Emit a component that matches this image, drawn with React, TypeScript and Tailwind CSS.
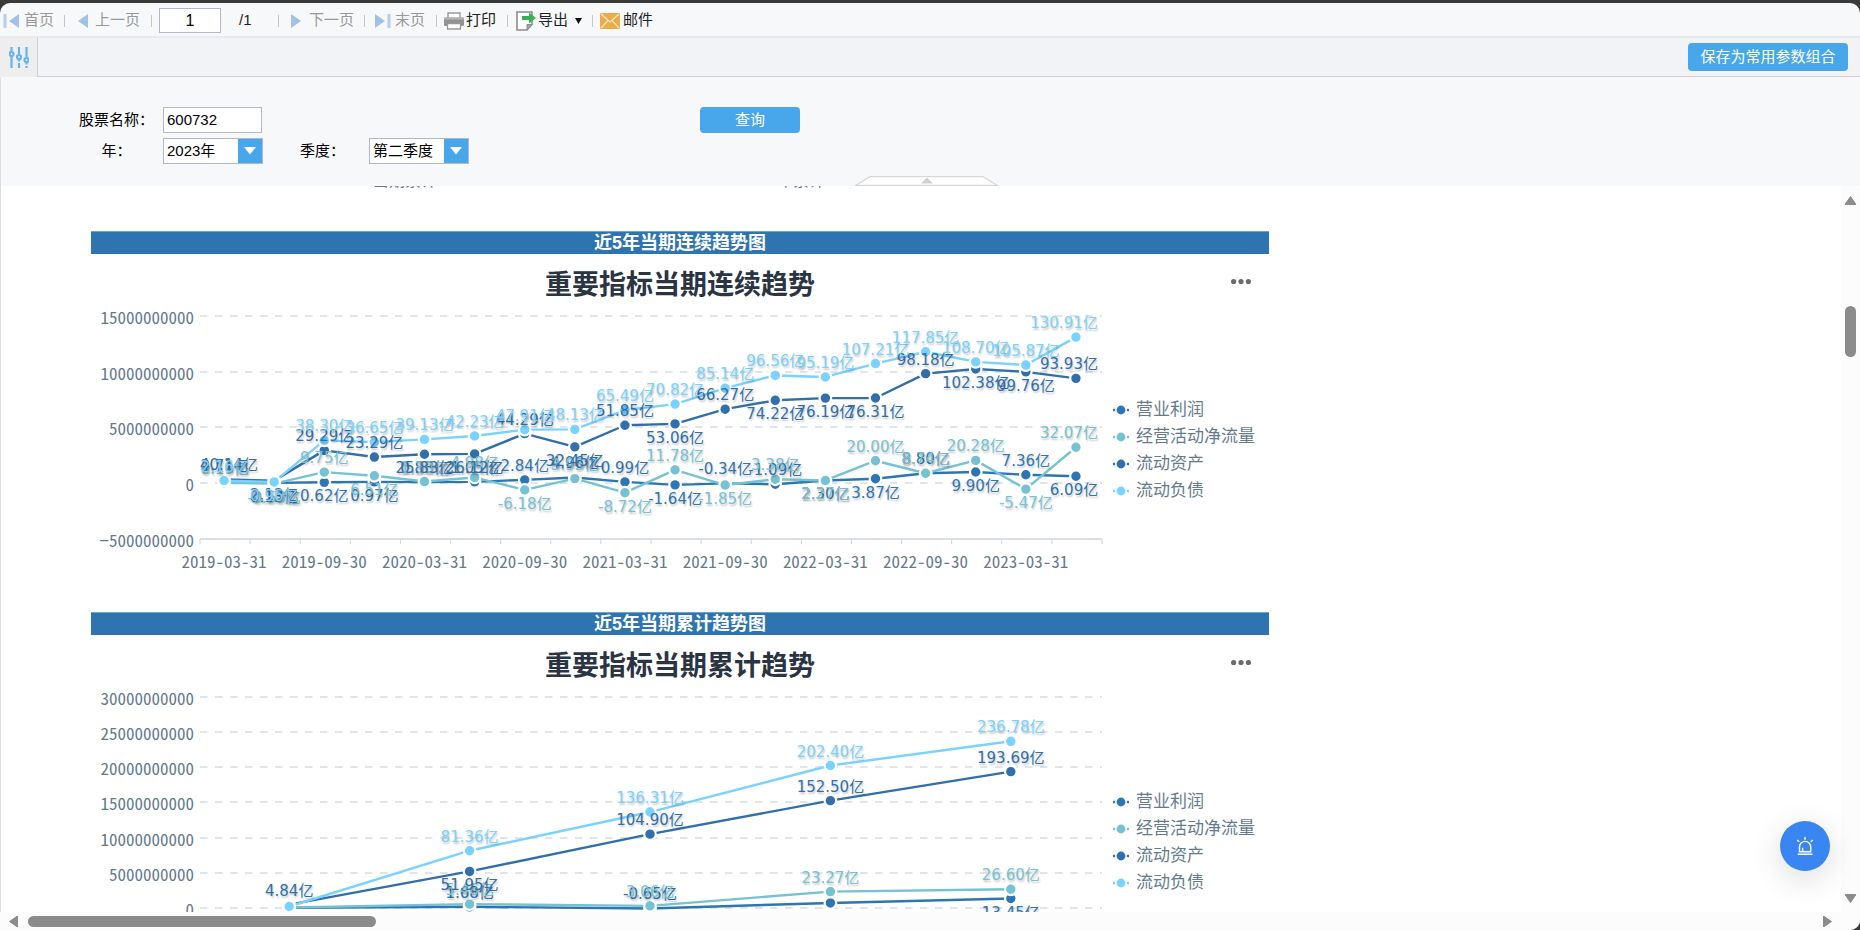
import React from 'react';

type Side = 'a' | 'b';
type Point = { v: number; text?: string; side: Side };
type Series = { name: string; color: string; points: Point[] };

const BLUE = '#2e75b3';
const TEAL = '#76c2d3';
const NAVY = '#316fac';
const SKY = '#79d2ff';

const parse = (src: string): Point[] =>
  src.split(' ').map((token) => {
    const [value, side, text] = token.split('/');
    return { v: Number(value), side: side as Side, text: text === '' ? undefined : text ?? value };
  });

const quarterly: Series[] = [
  {
    name: '营业利润',
    color: BLUE,
    points: parse(
      '2.71/a 0.13/b 0.62/b 0.97/b 0.83/a 1.05/a 2.84/a 4.96/a 0.99/a -1.64/b -0.34/a -1.09/a 2.30/b 3.87/b 8.80/a 9.90/b 7.36/a 6.09/b',
    ),
  },
  {
    name: '经营活动净流量',
    color: TEAL,
    points: parse(
      '0.19/a -0.53/b 9.75/a 6.51/b 1.30/a 4.98/a -6.18/b 3.95/a -8.72/b 11.78/a -1.85/b 3.38/a 2.27/b 20.00/a 8.74/a 20.28/a -5.47/b 32.07/a',
    ),
  },
  {
    name: '流动资产',
    color: NAVY,
    points: parse(
      '3.20/a/40.14 2.13/b 29.29/a 23.29/a 25.83/b 26.12/b 44.29/a 32.45/b 51.85/a 53.06/b 66.27/a 74.22/b 76.19/b 76.31/b 98.18/a 102.38/b 99.76/b 93.93/a',
    ),
  },
  {
    name: '流动负债',
    color: SKY,
    points: parse(
      '2.16/a 0.96/b 38.30/a 36.65/a 39.13/a 42.23/a 47.91/a 48.13/a 65.49/a 70.82/a 85.14/a 96.56/a 95.19/a 107.21/a 117.85/a 108.70/a 105.87/a 130.91/a',
    ),
  },
];

const yearly: Series[] = [
  { name: '营业利润', color: BLUE, points: parse('0.40/b/ 1.68/a -0.65/a 7.20/b/ 13.45/b') },
  { name: '经营活动净流量', color: TEAL, points: parse('0.80/b/ 5.46/a 3.06/a 23.27/a 26.60/a') },
  { name: '流动资产', color: NAVY, points: parse('4.84/a 51.95/b 104.90/a 152.50/a 193.69/a') },
  { name: '流动负债', color: SKY, points: parse('2.16/b/ 81.36/a 136.31/a 202.40/a 236.78/a') },
];

const LEFT = 109;
const RIGHT = 1011;

type ChartProps = {
  series: Series[];
  ticks: { label: string; y: number }[];
  zeroY: number;
  scale: number;
  axisY?: number;
  dates?: string[];
};

function LineChart({ series, ticks, zeroY, scale, axisY, dates }: ChartProps) {
  const count = series[0].points.length;
  const step = (RIGHT - LEFT) / count;
  const px = (i: number) => LEFT + step * (i + 0.5) - 1;
  const py = (v: number) => zeroY - v * scale;
  return (
    <svg width="1022" height="300" viewBox="0 0 1022 300" className="shrink-0 overflow-visible">
      {ticks.map((t) => (
        <g key={t.label}>
          {t.y !== axisY && (
            <line x1={LEFT} x2={RIGHT} y1={t.y} y2={t.y} stroke="#e0e4eb" strokeWidth="2" strokeDasharray="7.5 7.5" />
          )}
          <text
            x={LEFT - 6}
            y={t.y}
            textAnchor="end"
            dominantBaseline="central"
            className="fill-[#667a8d] font-['Noto_Sans_Mono_CJK_SC','Noto_Sans_CJK_SC',sans-serif] text-[17px]"
          >
            {t.label}
          </text>
        </g>
      ))}
      {axisY !== undefined && (
        <g stroke="#cdd4db">
          <line x1={LEFT} x2={RIGHT} y1={axisY} y2={axisY} strokeWidth="1.5" />
          {Array.from({ length: count + 1 }, (_, i) => (
            <line key={i} x1={LEFT + step * i} x2={LEFT + step * i} y1={axisY} y2={axisY + 5} />
          ))}
        </g>
      )}
      {dates?.map((d, i) => (
        <text
          key={d}
          x={px(i * 2)}
          y="248"
          textAnchor="middle"
          dominantBaseline="central"
          className="fill-[#667a8d] font-['Noto_Sans_Mono_CJK_SC','Noto_Sans_CJK_SC',sans-serif] text-[17px]"
        >
          {d}
        </text>
      ))}
      {series.map((s) => (
        <g key={s.name}>
          <polyline
            points={s.points.map((p, i) => `${px(i)},${py(p.v)}`).join(' ')}
            fill="none"
            stroke={s.color}
            strokeWidth="2.4"
            strokeLinejoin="round"
          />
          {s.points.map((p, i) => (
            <circle key={i} cx={px(i)} cy={py(p.v)} r="5.8" fill={s.color} stroke="#fff" strokeWidth="2.2" />
          ))}
        </g>
      ))}
      {series.map((s) => (
        <g
          key={s.name}
          fill={s.color}
          className="font-['DejaVu_Sans','Noto_Sans_CJK_SC',sans-serif] text-[15px] [text-shadow:1px_2px_2px_rgba(0,0,0,0.22)]"
        >
          {s.points.map((p, i) => {
            if (!p.text) return null;
            const min = LEFT + p.text.length * 4.4 + 7;
            const max = RIGHT - p.text.length * 5 - 8;
            return (
              <text
                key={i}
                x={Math.min(Math.max(px(i), min), max)}
                y={py(p.v) + (p.side === 'a' ? -14 : 14)}
                textAnchor="middle"
                dominantBaseline="central"
              >
                {p.text}亿
              </text>
            );
          })}
        </g>
      ))}
    </svg>
  );
}

function Legend({ series, className }: { series: Series[]; className: string }) {
  return (
    <ul className={`text-[17px] leading-[27px] whitespace-nowrap text-[#667a8d] ${className}`}>
      {series.map((s) => (
        <li key={s.name} className="flex items-center gap-[7px]">
          <svg width="16" height="12" viewBox="0 0 16 12" stroke={s.color} fill={s.color}>
            <path d="M0 6h16" strokeWidth="2.4" />
            <circle cx="8" cy="6" r="5.2" stroke="#fff" strokeWidth="1.6" />
          </svg>
          {s.name}
        </li>
      ))}
    </ul>
  );
}

function Section({
  heading,
  title,
  children,
}: {
  heading: string;
  title: string;
  children: React.ReactNode;
}) {
  return (
    <section className="w-[1178px]">
      <h2 className="h-[23px] border-t border-[#6fa3d0] bg-[#2d74b0] text-center text-[18px] leading-[23px] font-bold text-white">
        {heading}
      </h2>
      <div className="relative flex h-[58px] items-center justify-center pt-1">
        <h3 className="text-[27px] font-bold text-[#2a3443]">{title}</h3>
        <button type="button" aria-label="更多" className="absolute top-[22px] right-[18px] h-3 w-5">
          <svg width="20" height="12" viewBox="0 0 20 12" fill="#6b6b6b">
            <circle cx="2.6" cy="5.500" r="2.6" />
            <circle cx="10" cy="5.500" r="2.6" />
            <circle cx="17.4" cy="5.500" r="2.6" />
          </svg>
        </button>
      </div>
      <div className="flex items-start">{children}</div>
    </section>
  );
}

const Sep = ({ className }: { className: string }) => <span className={`h-3 w-px bg-[#c3c6cb] ${className}`} />;

function Arrow({ left, bar }: { left?: boolean; bar?: boolean }) {
  return (
    <svg
      width={bar ? 16 : 10}
      height="16"
      viewBox={bar ? '0 0 16 16' : '0 0 10 16'}
      fill="#a0c2e6"
      className={left ? 'rotate-180' : ''}
    >
      <path d="M0 1v14l10-7z" />
      {bar && <path d="M12.500 1h3v14h-3z" fill="#b4cfee" />}
    </svg>
  );
}

function Toolbar() {
  return (
    <div className="flex h-[35px] items-center border-b-2 border-[#e9eaed] pt-[2px] pl-[3px] text-[15px] whitespace-nowrap text-[#222]">
      <button type="button" className="flex items-center gap-[5px] text-[#999]">
        <Arrow left bar />
        首页
      </button>
      <Sep className="mr-[13px] ml-[10px]" />
      <button type="button" className="flex items-center gap-[7px] text-[#999]">
        <Arrow left />
        上一页
      </button>
      <Sep className="mr-[7px] ml-[11px]" />
      <input
        aria-label="页码"
        defaultValue="1"
        className="h-[25px] w-[62px] border border-[#b4b7cb] bg-white text-center text-[16px] text-black outline-none"
      />
      <span className="ml-[18px] w-[39px] text-[15px]">/1</span>
      <Sep className="mr-[12px]" />
      <button type="button" className="flex items-center gap-[8px] text-[#999]">
        <Arrow />
        下一页
      </button>
      <Sep className="mr-[10px] ml-[10px]" />
      <button type="button" className="flex items-center gap-[4px] text-[#999]">
        <Arrow bar />
        末页
      </button>
      <Sep className="mr-[7px] ml-[11px]" />
      <button type="button" className="flex items-center gap-[2px]">
        <svg width="20" height="18" viewBox="0 0 20 18">
          <path d="M4 6V1h12v5" fill="#fff" stroke="#999" strokeWidth="1.4" />
          <rect x="0" y="5.5" width="20" height="8.5" rx="1.5" fill="#929292" />
          <rect x="0" y="5.5" width="20" height="2" fill="#b5b5b5" />
          <path d="M3.5 11.500h13v5.500h-13z" fill="#fff" stroke="#999" strokeWidth="1.3" />
        </svg>
        打印
      </button>
      <Sep className="mr-[8px] ml-[11px]" />
      <button type="button" className="flex items-center gap-[2px]">
        <svg width="20" height="20" viewBox="0 0 20 20">
          <path d="M1 1h15v12.500l-5 5.500H1z" fill="#fff" stroke="#8b8b8b" strokeWidth="1.6" />
          <path d="M11 19v-5.500h5z" fill="#a5a5a5" stroke="#8b8b8b" />
          <path d="M6 5h7V1.500l7 5.500-7 5.500V9H6z" fill="#3eae55" />
        </svg>
        导出
        <svg width="7" height="6" viewBox="0 0 7 6" className="ml-[5px]">
          <path d="M0 0h7L3.500 6z" fill="#111" />
        </svg>
      </button>
      <Sep className="mr-[7px] ml-[10px]" />
      <button type="button" className="flex items-center gap-[3px]">
        <svg width="20" height="16" viewBox="0 0 20 16">
          <rect width="20" height="16" rx="1" fill="#ecac4c" />
          <path d="M1 1l9 8 9-8M1 15l7-7.500M19 15l-7-7.500" fill="none" stroke="#fbe5bd" strokeWidth="1.2" />
        </svg>
        邮件
      </button>
    </div>
  );
}

function Select({ id, value }: { id: string; value: string }) {
  return (
    <div className="relative h-[26px] w-[100px]">
      <select
        id={id}
        defaultValue={value}
        className="h-full w-full appearance-none border border-[#b4b7cb] bg-white pl-[3px] text-[15px] leading-[24px] text-black outline-none"
      >
        <option>{value}</option>
      </select>
      <span className="pointer-events-none absolute top-px right-px flex h-6 w-6 items-center justify-center bg-[#48a7ea]">
        <svg width="12" height="8" viewBox="0 0 12 8">
          <path d="M0 0h12L6 7.500z" fill="#fff" />
        </svg>
      </span>
    </div>
  );
}

function Params() {
  return (
    <form className="relative flex h-[109px] flex-col gap-[5px] border-l border-[#dddee0] bg-[#f7f8fa] pt-[30px] pl-[78px] text-[15px] whitespace-nowrap text-black">
      <div className="flex h-[26px] items-center">
        <label htmlFor="stock" className="mr-[9px] w-[75px] text-center">
          股票名称：
        </label>
        <input
          id="stock"
          defaultValue="600732"
          className="h-[26px] w-[99px] border border-[#b4b7cb] bg-white pb-[2px] pl-[3px] outline-none"
        />
        <button type="button" className="ml-[438px] h-[26px] w-[100px] rounded-[4px] bg-[#48a7ea] text-white">
          查询
        </button>
      </div>
      <div className="flex h-[26px] items-center">
        <label htmlFor="year" className="mr-[9px] w-[75px] text-center">
          年：
        </label>
        <Select id="year" value="2023年" />
        <label htmlFor="quarter" className="mr-[24px] ml-[37px]">
          季度：
        </label>
        <Select id="quarter" value="第二季度" />
      </div>
      <button type="button" aria-label="收起" className="absolute bottom-0 left-[854px] h-[10px] w-[143px]">
        <svg width="143" height="10" viewBox="0 0 143 10">
          <path d="M1 9.300L15 .7h113l14 8.600z" fill="#fff" stroke="#d8d8d8" strokeWidth="1.3" />
          <path d="M66 7.500l6-6 6 6z" fill="#d0d0d0" />
        </svg>
      </button>
    </form>
  );
}

const quarterlyTicks = [
  { label: '15000000000', y: 4 },
  { label: '10000000000', y: 60 },
  { label: '5000000000', y: 115 },
  { label: '0', y: 171 },
  { label: '−5000000000', y: 227 },
];

const yearlyTicks = [
  { label: '30000000000', y: 4 },
  { label: '25000000000', y: 39 },
  { label: '20000000000', y: 74 },
  { label: '15000000000', y: 109 },
  { label: '10000000000', y: 145 },
  { label: '5000000000', y: 180 },
  { label: '0', y: 215 },
];

const dates = [
  '2019-03-31',
  '2019-09-30',
  '2020-03-31',
  '2020-09-30',
  '2021-03-31',
  '2021-09-30',
  '2022-03-31',
  '2022-09-30',
  '2023-03-31',
];

export default function App() {
  return (
    <div className="h-screen bg-[#3a3a3a] pt-[3px] font-['Liberation_Sans','Noto_Sans_CJK_SC',sans-serif]">
      <div className="flex h-full flex-col overflow-hidden rounded-t-[10px] rounded-br-[10px] bg-[#f7f8fa]">
        <Toolbar />
        <div className="flex h-[39px] shrink-0 items-stretch justify-between bg-[#f2f3f7]">
          <button
            type="button"
            aria-label="参数"
            className="flex w-[38px] items-center justify-center border-r border-[#cfd0d3] bg-[#eeeeee]"
          >
            <svg width="20" height="21" viewBox="0 0 20 21" fill="none" stroke="#66b4ec" strokeWidth="2.2">
              <path d="M2.500 0v4M2.500 10v11M10 0v7M10 13v1.500M10 16v5M17.500 0v10M17.500 16v1.500M17.500 19v2" />
              <circle cx="2.500" cy="7" r="2" />
              <circle cx="10" cy="10" r="2" />
              <circle cx="17.500" cy="13" r="2" />
            </svg>
          </button>
          <div className="flex flex-1 items-center justify-end border-b border-[#cfd0d3] pr-3">
            <button type="button" className="h-7 w-[160px] rounded-[4px] bg-[#48a7ea] text-[15px] text-white">
              保存为常用参数组合
            </button>
          </div>
        </div>
        <Params />
        <div className="flex min-h-0 flex-1 border-l border-[#dddee0]">
          <main className="min-w-0 flex-1 overflow-hidden bg-white pl-[90px]">
            <div className="-mt-[15px] mb-10 flex h-5 gap-[340px] pl-[282px] text-[16px] leading-5 text-[#667a8d]">
              <span>当期累计</span>
              <span>年累计</span>
            </div>
            <Section heading="近5年当期连续趋势图" title="重要指标当期连续趋势">
              <LineChart series={quarterly} ticks={quarterlyTicks} zeroY={171} scale={1.114} axisY={227} dates={dates} />
              <Legend series={quarterly} className="pt-[84px]" />
            </Section>
            <Section heading="近5年当期累计趋势图" title="重要指标当期累计趋势">
              <LineChart series={yearly} ticks={yearlyTicks} zeroY={215} scale={0.704} />
              <Legend series={yearly} className="pt-[95px]" />
            </Section>
          </main>
          <div className="flex w-[19px] flex-col items-center bg-[#fcfcfc] pt-[10px] pb-[9px]">
            <svg width="11" height="9" viewBox="0 0 11 9">
              <path d="M5.500 .5L11 8.500H0z" fill="#8b8b8b" stroke="#8b8b8b" strokeLinejoin="round" />
            </svg>
            <div className="mt-[101px] h-[51px] w-[11px] rounded-full bg-[#8b8b8b]" />
            <svg width="11" height="9" viewBox="0 0 11 9" className="mt-auto">
              <path d="M5.500 8.500L11 .5H0z" fill="#8b8b8b" stroke="#8b8b8b" strokeLinejoin="round" />
            </svg>
          </div>
        </div>
        <div className="flex h-[18px] shrink-0 items-center bg-[#fcfcfc] pr-[28px] pl-[9px]">
          <svg width="9" height="11" viewBox="0 0 9 11">
            <path d="M.5 5.500L8.500 0v11z" fill="#8b8b8b" stroke="#8b8b8b" strokeLinejoin="round" />
          </svg>
          <div className="ml-[10px] h-[11px] w-[348px] rounded-full bg-[#8b8b8b]" />
          <svg width="9" height="11" viewBox="0 0 9 11" className="ml-auto">
            <path d="M8.500 5.500L.5 0v11z" fill="#8b8b8b" stroke="#8b8b8b" strokeLinejoin="round" />
          </svg>
        </div>
      </div>
      <button
        type="button"
        aria-label="提醒"
        className="fixed right-[30px] bottom-[59px] flex size-[50px] items-center justify-center rounded-full bg-[#3985f2] shadow-[0_8px_32px_rgba(0,0,0,0.14)]"
      >
        <svg width="18" height="18" viewBox="0 0 18 18" fill="none" stroke="#fff" strokeWidth="1.400">
          <path d="M3.500 14.800V10a5.600 5.600 0 0 1 11.200 0v4.800z" />
          <path d="M6.600 14.500v-3.800M1.800 17.200h14.600M9 0v2.800M1.200 3l2 1.800M16.800 3l-2 1.800" />
        </svg>
      </button>
    </div>
  );
}
